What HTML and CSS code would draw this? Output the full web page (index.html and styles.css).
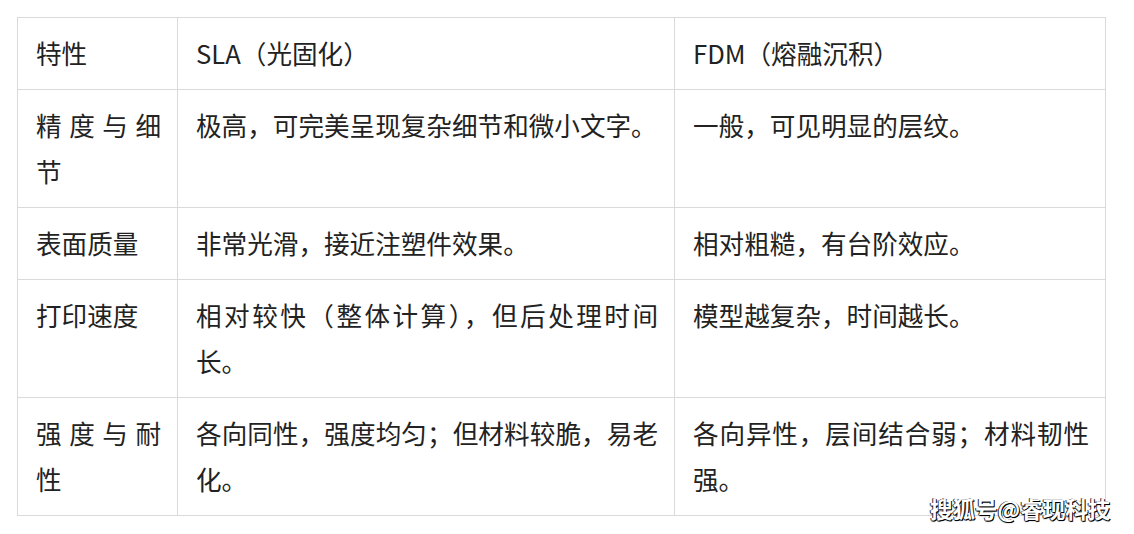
FILE: index.html
```html
<!DOCTYPE html>
<html lang="zh-CN">
<head>
<meta charset="utf-8">
<title>SLA vs FDM</title>
<link rel="stylesheet" href="styles.css">
</head>
<body>
<div class="page">
  <table class="compare">
    <colgroup>
      <col class="c1">
      <col class="c2">
      <col class="c3">
    </colgroup>
    <tr>
      <td>特性</td>
      <td>SLA（光固化）</td>
      <td>FDM（熔融沉积）</td>
    </tr>
    <tr>
      <td>精度与细节</td>
      <td>极高，可完美呈现复杂细节和微小文字。</td>
      <td>一般，可见明显的层纹。</td>
    </tr>
    <tr>
      <td>表面质量</td>
      <td>非常光滑，接近注塑件效果。</td>
      <td>相对粗糙，有台阶效应。</td>
    </tr>
    <tr>
      <td>打印速度</td>
      <td>相对较快（整体计算），但后处理时间长。</td>
      <td>模型越复杂，时间越长。</td>
    </tr>
    <tr>
      <td>强度与耐性</td>
      <td>各向同性，强度均匀；但材料较脆，易老化。</td>
      <td>各向异性，层间结合弱；材料韧性强。</td>
    </tr>
  </table>
  <div class="watermark">搜狐号@睿现科技</div>
</div>
</body>
</html>
```

FILE: styles.css
```css
html, body {
  margin: 0;
  padding: 0;
  background: #ffffff;
}

.page {
  position: relative;
  width: 1134px;
  height: 534px;
  padding: 17px 0 0 17px;
  box-sizing: border-box;
}

.compare {
  border-collapse: collapse;
  table-layout: fixed;
  width: 1088px;
  font-family: "Noto Sans CJK SC", "Liberation Sans", sans-serif;
  font-size: 25.6px;
  line-height: 46px;
  color: #222222;
}

.c1 { width: 160px; }
.c2 { width: 497px; }
.c3 { width: 431px; }

.compare td {
  border: 1px solid #dadada;
  padding: 12px 16px 13px 18px;
  vertical-align: top;
  text-align: justify;
}

.watermark {
  position: absolute;
  left: 930px;
  top: 492px;
  font-family: "Noto Sans CJK SC", sans-serif;
  font-size: 22.5px;
  font-weight: 700;
  line-height: 32px;
  color: #ffffff;
  text-shadow: 1px 1px 0 #000, -1px 0 0 #333, 0 1px 1px #000;
}
```
